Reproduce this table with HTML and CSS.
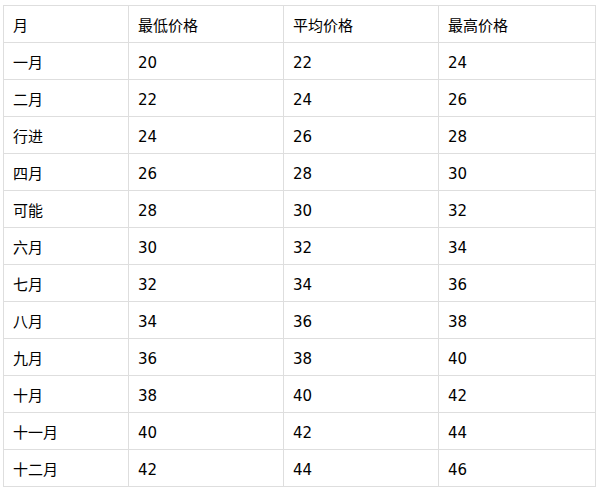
FILE: index.html
```html
<!DOCTYPE html>
<html lang="zh">
<head>
<meta charset="utf-8">
<link rel="stylesheet" href="styles.css">
</head>
<body>
<table class="price-table">
  <colgroup>
    <col class="c1"><col class="c2"><col class="c3"><col class="c4">
  </colgroup>
  <thead>
    <tr><th>月</th><th>最低价格</th><th>平均价格</th><th>最高价格</th></tr>
  </thead>
  <tbody>
    <tr><td>一月</td><td>20</td><td>22</td><td>24</td></tr>
    <tr><td>二月</td><td>22</td><td>24</td><td>26</td></tr>
    <tr><td>行进</td><td>24</td><td>26</td><td>28</td></tr>
    <tr><td>四月</td><td>26</td><td>28</td><td>30</td></tr>
    <tr><td>可能</td><td>28</td><td>30</td><td>32</td></tr>
    <tr><td>六月</td><td>30</td><td>32</td><td>34</td></tr>
    <tr><td>七月</td><td>32</td><td>34</td><td>36</td></tr>
    <tr><td>八月</td><td>34</td><td>36</td><td>38</td></tr>
    <tr><td>九月</td><td>36</td><td>38</td><td>40</td></tr>
    <tr><td>十月</td><td>38</td><td>40</td><td>42</td></tr>
    <tr><td>十一月</td><td>40</td><td>42</td><td>44</td></tr>
    <tr><td>十二月</td><td>42</td><td>44</td><td>46</td></tr>
  </tbody>
</table>
</body>
</html>
```

FILE: styles.css
```css
html, body {
  margin: 0;
  padding: 0;
  background: #ffffff;
}
body {
  padding: 5px 0 0 3px;
  font-family: "DejaVu Sans", "Noto Sans CJK SC", sans-serif;
  font-size: 15px;
  color: #000;
}
.price-table {
  border-collapse: collapse;
  table-layout: fixed;
  width: 592px;
}
.c1 { width: 125px; }
.c2 { width: 155px; }
.c3 { width: 155px; }
.c4 { width: 157px; }
.price-table th,
.price-table td {
  border: 1px solid #dedede;
  padding: 4px 9px 0 9px;
  text-align: left;
  font-weight: normal;
  vertical-align: middle;
  line-height: 20px;
  box-sizing: border-box;
  height: 37px;
}
```
